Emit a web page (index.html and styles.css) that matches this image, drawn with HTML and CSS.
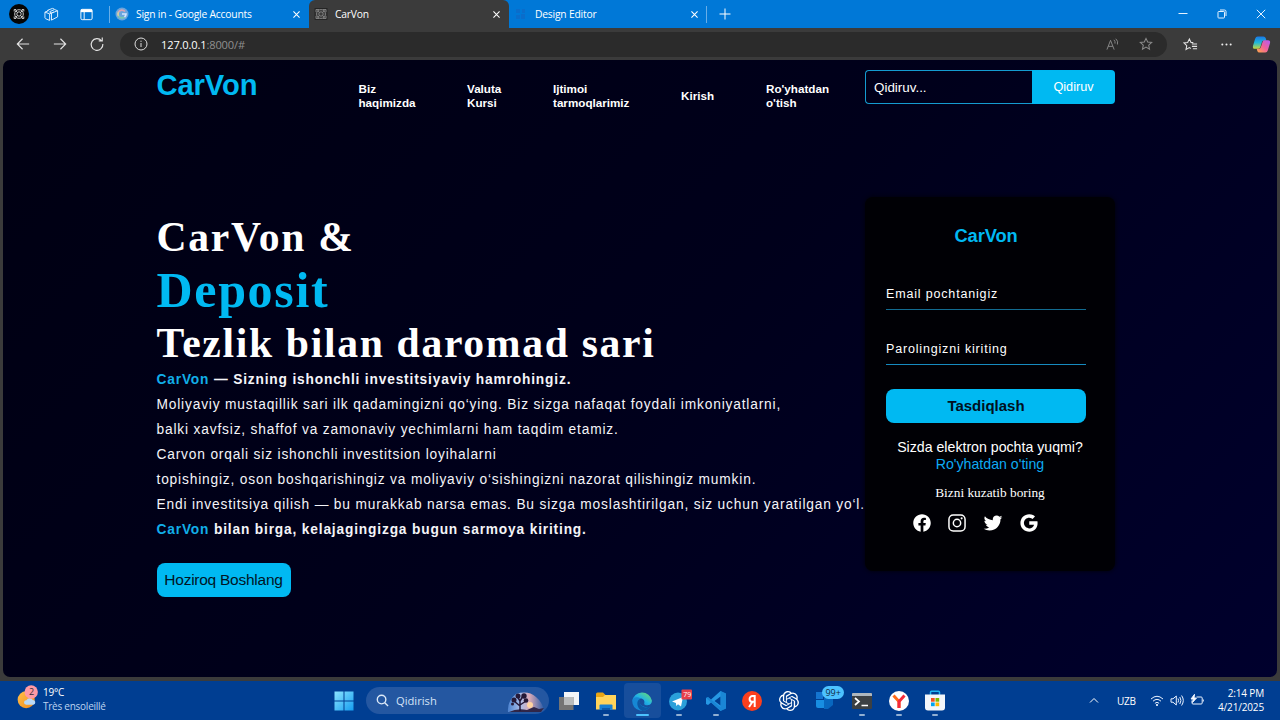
FILE: index.html
```html
<!DOCTYPE html>
<html lang="uz">
<head>
<meta charset="utf-8">
<title>CarVon</title>
<link rel="stylesheet" href="styles.css">
</head>
<body>
<div class="tabs">
  <div class="tab-tools">
    <svg class="profile" viewBox="0 0 20 20"><circle cx="10" cy="10" r="10" fill="#050505"/><g fill="none" stroke="#ddd" stroke-width=".9"><circle cx="10" cy="10" r="4.300"/><circle cx="10" cy="10" r="2.200"/><path d="M5.200 7.500V5.500h2M12.800 5.500h2v2M14.800 12.500v2h-2M7.200 14.500h-2v-2M6.500 6.500l2 2M13.500 6.500l-2 2M6.500 13.500l2-2M13.500 13.500l-2-2"/></g></svg>
    <svg class="tool" viewBox="0 0 16 16" fill="none" stroke="#e4f2ff"><path d="M1 5.500 6 7.300v7L1.800 12.500Q1 12 1 11.500zM1 5.500 5 3.800M6 7.300l4.500-2M3.800 4.300V3.500L9 1.500l2 .7M8 6.500l6.500-2.500v6.500L8 14zM8 6.500 6 5.500M14.500 4l-3.200-1.300L6 5"/></svg>
    <svg class="tool" viewBox="0 0 16 16" fill="none" stroke="#fff"><rect x="2" y="2.500" width="12" height="11" rx="1.500"/><path d="M2 4h12" stroke-width="3"/><path d="M5.500 5v8"/></svg>
  </div>
  <span class="divider"></span>
  <div class="tab first">
    <svg class="fav" viewBox="0 0 14 14"><circle cx="7" cy="7" r="6.500" fill="#6aa5dc"/><g fill="none" stroke-width="1.700"><path d="M10 4.500A4 4 0 0 0 3.500 5" stroke="#dca3b2"/><path d="M3.500 5a4 4 0 0 0 0 4" stroke="#d9cfa0"/><path d="M3.500 9A4 4 0 0 0 9.500 10" stroke="#7bc7b0"/><path d="M9.500 10A4 4 0 0 0 11 7H7" stroke="#d5e5ff"/></g></svg>
    <span class="tab-name">Sign in - Google Accounts</span>
    <svg class="x" viewBox="0 0 8 8"><path d="M.5.5l7 7M7.500.5l-7 7"/></svg>
  </div>
  <div class="tab active">
    <svg class="fav" viewBox="0 0 14 14" fill="none" stroke="#8d8d8d" stroke-width=".8"><rect x="1" y="1.500" width="12" height="11" stroke="#202020"/><circle cx="7" cy="7" r="4.500"/><circle cx="7" cy="7" r="2.200"/><path d="M2 5V2.500h3M9 2.500h3V5M12 9v2.500H9M5 11.500H2V9M3.500 3.500l2 2M10.500 3.500l-2 2M3.500 10.500l2-2M10.500 10.500l-2-2"/></svg>
    <span class="tab-name">CarVon</span>
    <svg class="x" viewBox="0 0 8 8"><path d="M.5.5l7 7M7.500.5l-7 7"/></svg>
  </div>
  <div class="tab last">
    <svg class="fav" viewBox="0 0 14 14" fill="#0a6dcb"><rect x="2" y="2" width="4" height="4"/><rect x="8" y="2" width="3" height="4"/><rect x="2" y="8" width="4" height="4"/><rect x="7" y="7" width="4" height="5"/></svg>
    <span class="tab-name">Design Editor</span>
    <svg class="x" viewBox="0 0 8 8"><path d="M.5.5l7 7M7.500.5l-7 7"/></svg>
  </div>
  <span class="divider short"></span>
  <svg class="plus" viewBox="0 0 12 12"><path d="M6 .5v11M.5 6h11"/></svg>
  <div class="win">
    <svg viewBox="0 0 10 10"><path d="M.5 4.500h9"/></svg>
    <svg viewBox="0 0 10 10"><rect x="1" y="2.500" width="6.500" height="6.500" rx=".7"/><path d="M3 1h4.500q1.500 0 1.500 1.500V7"/></svg>
    <svg viewBox="0 0 10 10"><path d="M.8.8l8.400 8.400M9.200.8.8 9.200"/></svg>
  </div>
</div>

<div class="toolbar">
  <div class="nav-btns">
    <svg viewBox="0 0 16 16"><path d="M15 8H1.800M7.500 2 1.500 8l6 6"/></svg>
    <svg viewBox="0 0 16 16"><path d="M1 8h13.200M8.500 2l6 6-6 6"/></svg>
    <svg viewBox="0 0 16 16"><path d="M13.200 4.300A6.700 6.700 0 1 0 14.700 8M14 .5v4h-4"/></svg>
  </div>
  <div class="address">
    <svg class="info" viewBox="0 0 14 14"><circle cx="7" cy="7" r="6"/><path d="M7 6v4M7 3.700v1.200"/></svg>
    <span class="url">127.0.0.1<span>:8000/#</span></span>
    <svg class="aloud" viewBox="0 0 14 14"><path d="M1 12.500 4.900 2.500l3.900 10M2.400 9h5M8.500 2q1.700 1.500 1.200 4M10.500.8q3 2.500 1.800 6.200"/></svg>
    <svg class="star" viewBox="0 0 16 16"><path d="m8 1.600 1.900 4.200 4.600.5-3.400 3.100.9 4.500L8 11.600l-4 2.300.9-4.500L1.500 6.300l4.600-.5z"/></svg>
  </div>
  <div class="actions">
    <svg class="favlist" viewBox="0 0 16 16"><path d="M11 6 8.500 5.800 6.800 2 5 5.800 1 6.300l3 2.900-.8 4.200L6.800 11.300l1.500.9M9.500 7.500H15M9.500 10H15M10.500 12.500H15"/></svg>
    <svg class="dots" viewBox="0 0 14 14"><circle cx="2.500" cy="7" r="1.100"/><circle cx="7" cy="7" r="1.100"/><circle cx="11.500" cy="7" r="1.100"/></svg>
    <svg class="copilot" viewBox="0 0 20 20"><defs><linearGradient id="ca" x1="0" y1="0" x2="0" y2="1"><stop offset="0" stop-color="#1877e8"/><stop offset=".5" stop-color="#20b6d9"/><stop offset="1" stop-color="#c8d63a"/></linearGradient><linearGradient id="cb" x1="1" y1="0" x2="0" y2="1"><stop offset="0" stop-color="#b15cf5"/><stop offset=".5" stop-color="#f0609c"/><stop offset="1" stop-color="#ffab45"/></linearGradient></defs><path d="M6 1.500h6q2 0 2.500 2l.7 2.500h-3q-1.400 0-1.800 1.500L8.800 13q-.5 1.500-2 1.500H3Q.5 14.500 1 11.500L3.300 4Q4 1.500 6 1.500z" fill="url(#ca)"/><path d="M14 18.500H8q-2 0-2.500-2L5 14.500h2.500q1.400 0 1.800-1.500L11.200 7q.5-1.500 2-1.500H17q2.500 0 2 3L16.700 16q-.7 2.500-2.700 2.500z" fill="url(#cb)"/></svg>
  </div>
</div>

<main class="page">
  <header class="head">
    <div class="logo">CarVon</div>
    <nav class="menu">
      <a class="m1">Biz<br>haqimizda</a>
      <a class="m2">Valuta<br>Kursi</a>
      <a class="m3">Ijtimoi<br>tarmoqlarimiz</a>
      <a class="m4">Kirish</a>
      <a class="m5">Ro'yhatdan<br>o'tish</a>
    </nav>
    <div class="search"><span class="search-field">Qidiruv...</span><span class="search-btn">Qidiruv</span></div>
  </header>
  <div class="content">
    <section class="hero">
      <h1><span>CarVon &amp;</span><span class="big">Deposit</span><span>Tezlik bilan daromad sari</span></h1>
      <p><b><i>CarVon</i> — Sizning ishonchli investitsiyaviy hamrohingiz.</b><br>Moliyaviy mustaqillik sari ilk qadamingizni qo‘ying. Biz sizga nafaqat foydali imkoniyatlarni,<br>balki xavfsiz, shaffof va zamonaviy yechimlarni ham taqdim etamiz.<br>Carvon orqali siz ishonchli investitsion loyihalarni<br>topishingiz, oson boshqarishingiz va moliyaviy o‘sishingizni nazorat qilishingiz mumkin.<br>Endi investitsiya qilish — bu murakkab narsa emas. Bu sizga moslashtirilgan, siz uchun yaratilgan yo‘l.<br><b><i>CarVon</i> bilan birga, kelajagingizga bugun sarmoya kiriting.</b></p>
      <div class="cta">Hoziroq Boshlang</div>
    </section>
    <section class="form">
      <h2>CarVon</h2>
      <div class="field">Email pochtanigiz</div>
      <div class="field second">Parolingizni kiriting</div>
      <div class="submit">Tasdiqlash</div>
      <div class="signup">Sizda elektron pochta yuqmi?<br><a>Ro'yhatdan o'ting</a></div>
      <div class="follow">Bizni kuzatib boring</div>
      <div class="social">
        <svg viewBox="0 0 512 512"><path d="M480 257.350c0-123.700-100.300-224-224-224s-224 100.300-224 224c0 111.800 81.900 204.470 189 221.290V322.120h-56.890v-64.770H221V208c0-56.130 33.450-87.160 84.610-87.160 24.510 0 50.150 4.380 50.150 4.380v55.130H327.500c-27.810 0-36.510 17.260-36.510 35v42h62.120l-9.920 64.770H291v156.540c107.100-16.810 189-109.480 189-221.310z"/></svg>
        <svg viewBox="0 0 512 512"><rect x="50" y="50" width="412" height="412" rx="110" fill="none" stroke="#fff" stroke-width="38"/><circle cx="256" cy="256" r="94" fill="none" stroke="#fff" stroke-width="38"/><circle cx="375" cy="137" r="27"/></svg>
        <svg viewBox="0 0 512 512"><path d="M496 109.500a201.800 201.800 0 01-56.550 15.300 97.510 97.510 0 0043.330-53.600 197.740 197.740 0 01-62.560 23.500A99.140 99.140 0 00348.310 64c-54.420 0-98.460 43.400-98.460 96.900a93.210 93.210 0 002.540 22.100 280.700 280.700 0 01-203-101.300A95.690 95.690 0 0036 130.400c0 33.600 17.530 63.300 44 80.700A97.500 97.500 0 0135.220 199v1.200c0 47 34 86.100 79 95a100.760 100.760 0 01-25.940 3.400 94.380 94.380 0 01-18.510-1.800c12.510 38.500 48.920 66.500 92.050 67.300A199.590 199.590 0 0139.500 405.600a203 203 0 01-23.500-1.400A278.680 278.680 0 00166.740 448c181.360 0 280.440-147.700 280.440-275.800 0-4.200-.11-8.400-.31-12.500A198.480 198.480 0 00496 109.500z"/></svg>
        <svg viewBox="0 0 512 512"><path d="M473.160 221.480l-2.260-9.590H262.460v88.220H387c-12.930 61.400-72.930 93.720-121.940 93.720-35.660 0-73.250-15-98.130-39.110a140.080 140.080 0 01-41.800-98.880c0-37.160 16.700-74.330 41-98.780s61-38.130 97.490-38.130c41.790 0 71.740 22.190 82.940 32.310l62.690-62.360C390.860 72.720 340.340 32 261.600 32c-60.750 0-119 23.270-161.580 65.710C58 139.500 36.250 199.930 36.250 256s20.580 113.480 61.300 155.600c43.510 44.920 105.130 68.400 168.580 68.400 57.730 0 112.450-22.620 151.450-63.660 38.340-40.400 58.170-96.300 58.170-154.900 0-24.670-2.480-39.320-2.590-39.960z"/></svg>
      </div>
    </section>
  </div>
</main>

<footer class="taskbar">
  <div class="weather">
    <svg viewBox="0 0 24 28"><defs><linearGradient id="sun" x1="0" y1="0" x2="1" y2="1"><stop offset="0" stop-color="#ffc04a"/><stop offset="1" stop-color="#f28b1c"/></linearGradient></defs><circle cx="10" cy="17" r="9.300" fill="url(#sun)"/><path d="M10 22.500a2.500 2.500 0 0 1 .3-5 4 4 0 0 1 7-.3 2.700 2.700 0 0 1 .7 5.300z" fill="#b9d9f7"/><circle cx="15.500" cy="8.500" r="7.300" fill="#ff99a4"/></svg>
    <span class="badge">2</span>
    <div class="weather-text"><div>19°C</div><div class="desc">Très ensoleillé</div></div>
  </div>
  <div class="apps">
    <svg class="start" viewBox="0 0 20 20"><defs><linearGradient id="wn" x1="0" y1="0" x2="1" y2="1"><stop offset="0" stop-color="#8be4ff"/><stop offset="1" stop-color="#149df0"/></linearGradient></defs><path d="M.5.5h9v9h-9zM10.500.5h9v9h-9zM.5 10.500h9v9h-9zM10.500 10.500h9v9h-9z" fill="url(#wn)"/></svg>
    <div class="find">
      <svg class="lens" viewBox="0 0 14 14"><circle cx="6" cy="6" r="4.600"/><path d="m9.400 9.400 3.600 3.600"/></svg>
      <span>Qidirish</span>
      <svg class="scene" viewBox="0 0 40 22"><defs><linearGradient id="sky" x1="0" x2="1"><stop offset="0" stop-color="#4b82cf"/><stop offset=".35" stop-color="#a9bdea"/><stop offset=".6" stop-color="#d9aab6"/><stop offset="1" stop-color="#2b5ba7"/></linearGradient></defs><path d="M2 21Q1 10 10 3q12-4 20 3 6 5 8 13l-4 2z" fill="url(#sky)"/><circle cx="24" cy="14" r="3" fill="#ffd3a0"/><path d="M3 21q8-4 18-2l7-3 5 2 5-1-3 4z" fill="#302648"/><path d="M14 20V9M14 15 8 10M14 14l6-4M14 10l-3-5M14 10l3-5" stroke="#241737" stroke-width="1.500" fill="none"/><g fill="#251937"><circle cx="8" cy="9" r="2.500"/><circle cx="12" cy="5" r="2.500"/><circle cx="18" cy="5" r="2.700"/><circle cx="20" cy="9.500" r="2.300"/><circle cx="6.500" cy="13" r="1.500"/></g></svg>
    </div>
    <div class="app"><svg viewBox="0 0 20 20"><rect x="5" y="1" width="15" height="13" fill="#f2f5f8"/><rect x="0" y="6" width="14.500" height="13" fill="#747474"/><path d="M5 6h9.500v8H5z" fill="#b9bcbd"/></svg></div>
    <div class="app run"><svg viewBox="0 0 20 20"><path d="M0 3q0-1.500 1.500-1.500h5.500l2.500 2.500H19q1 0 1 1V18H0z" fill="#e8a515"/><path d="M0 6h7l2-2h11v14.500H0z" fill="#ffd45b"/><path d="M3.500 19v-4.500q0-1 1-1h11q1 0 1 1V19z" fill="#1680d4"/><path d="M6 19v-2h8v2z" fill="#0d5bab"/></svg></div>
    <div class="app run current"><svg viewBox="0 0 20 20"><defs><linearGradient id="ed" x1="0" y1="1" x2="1" y2="0"><stop offset="0" stop-color="#0d69c4"/><stop offset=".5" stop-color="#22b4e6"/><stop offset="1" stop-color="#73e35c"/></linearGradient></defs><path d="M.2 10A10 10 0 0 1 19.900 9.500c.1 3-2 4.700-4.500 4.700-2.400 0-3.500-.8-3.200-1.800.8-2.400-.5-5-3.800-5-4 0-7 1.300-8.200 2.600z" fill="url(#ed)"/><path d="M.2 10C1 6.300 5 5.300 8.400 7.300 5.800 9 6.700 15.500 15 16.500c1.200.1 2.500-.3 3.300-.9A10 10 0 0 1 .2 10z" fill="#1687d4"/><path d="M7.300 8.300C3.500 11 5.500 18.500 10.500 19.900c3.500-.1 6.200-1.800 7.800-4.300C11 18.500 6.700 13 7.300 8.300z" fill="#0d57a4"/></svg></div>
    <div class="app run"><svg viewBox="0 0 20 20"><circle cx="9" cy="10.500" r="9" fill="#2aa0da"/><path d="m3 10.500 11-4.500-2 9.500-3-2.300-1.700 1.700-.4-2.800z" fill="#fff"/><rect x="12.500" y="-1.500" width="10.500" height="10" rx="1" fill="#e8404a"/></svg><span class="tg-count">79</span></div>
    <div class="app run"><svg viewBox="0 0 20 20"><path d="M14.500 0 20 2.500v15L14.500 20 5 11.500 2 14 0 13V7l2-1 3 2.500zM14.500 5.500 8.500 10l6 4.500z" fill="#2698e5" fill-rule="evenodd"/><path d="m0 7 2-1 13 10.500V20zM14.500 0 20 2.500v15L14.500 20z" fill="#1178c8" opacity=".55"/></svg></div>
    <div class="app"><svg viewBox="0 0 20 20"><circle cx="10" cy="10" r="10" fill="#fc3f1d"/><path d="M12.700 4v12M12.700 5h-2.200a2.900 2.900 0 0 0 0 5.800h2.200M10.500 10.800 7 16" fill="none" stroke="#fff" stroke-width="2"/></svg></div>
    <div class="app"><svg viewBox="0 0 24 24"><path fill="#fff" d="M22.2819 9.8211a5.9847 5.9847 0 0 0-.5157-4.9108 6.0462 6.0462 0 0 0-6.5098-2.9A6.0651 6.0651 0 0 0 4.9807 4.1818a5.9847 5.9847 0 0 0-3.9977 2.9 6.0462 6.0462 0 0 0 .7427 7.0966 5.98 5.98 0 0 0 .511 4.9107 6.051 6.051 0 0 0 6.5146 2.9001A5.9847 5.9847 0 0 0 13.2599 24a6.0557 6.0557 0 0 0 5.7718-4.2058 5.9894 5.9894 0 0 0 3.9977-2.9001 6.0557 6.0557 0 0 0-.7475-7.0729zm-9.022 12.6081a4.4755 4.4755 0 0 1-2.8764-1.0408l.1419-.0804 4.7783-2.7582a.7948.7948 0 0 0 .3927-.6813v-6.7369l2.02 1.1686a.071.071 0 0 1 .038.052v5.5826a4.504 4.504 0 0 1-4.4945 4.4944zm-9.6607-4.1254a4.4708 4.4708 0 0 1-.5346-3.0137l.142.0852 4.783 2.7582a.7712.7712 0 0 0 .7806 0l5.8428-3.3685v2.3324a.0804.0804 0 0 1-.0332.0615L9.74 19.9502a4.4992 4.4992 0 0 1-6.1408-1.6464zM2.3408 7.8956a4.485 4.485 0 0 1 2.3655-1.9728V11.6a.7664.7664 0 0 0 .3879.6765l5.8144 3.3543-2.0201 1.1685a.0757.0757 0 0 1-.071 0l-4.8303-2.7865A4.504 4.504 0 0 1 2.3408 7.872zm16.5963 3.8558L13.1038 8.364 15.1192 7.2a.0757.0757 0 0 1 .071 0l4.8303 2.7913a4.4944 4.4944 0 0 1-.6765 8.1042v-5.6772a.79.79 0 0 0-.407-.667zm2.0107-3.0231l-.142-.0852-4.7735-2.7818a.7759.7759 0 0 0-.7854 0L9.409 9.2297V6.8974a.0662.0662 0 0 1 .0284-.0615l4.8303-2.7866a4.4992 4.4992 0 0 1 6.6802 4.66zM8.3065 12.863l-2.02-1.1638a.0804.0804 0 0 1-.038-.0567V6.0742a4.4992 4.4992 0 0 1 7.3757-3.4537l-.142.0805L8.704 5.459a.7948.7948 0 0 0-.3927.6813zm1.0976-2.3654l2.602-1.4998 2.6069 1.4998v2.9994l-2.5974 1.4997-2.6067-1.4997Z"/></svg></div>
    <div class="app"><svg viewBox="0 0 20 20"><path d="M1 1h7v7H1z" fill="#1474d0"/><path d="M1 9h8v8H3q-2 0-2-2z" fill="#188ee2"/><path d="M9 7h9v7l-5 4H9z" fill="#0867bf"/></svg><span class="count">99+</span></div>
    <div class="app run"><svg viewBox="0 0 20 20"><rect y="2" width="20" height="16" rx="1" fill="#3c4043"/><path d="M0 5V3q0-1 1-1h18q1 0 1 1v2z" fill="#aeb6bd"/><path d="m3 7 4 3.500L3 14M9.500 14.500H16" stroke="#fff" stroke-width="1.700" fill="none"/></svg></div>
    <div class="app run"><svg viewBox="0 0 20 20"><circle cx="10" cy="10" r="10" fill="#fff"/><path d="M4.500 4.500 10 10.500V17" stroke="#ff6b1a" stroke-width="3" fill="none"/><path d="M15.500 4.500 10 10.500V17" stroke="#f52b3b" stroke-width="3" fill="none"/></svg></div>
    <div class="app run"><svg viewBox="0 0 20 20"><path d="M5.500 5V1.300q0-1 1-1h7q1 0 1 1V5" fill="none" stroke="#21b6f3" stroke-width="1.500"/><path d="M0 3.500h20V16.500q0 3-3 3H3q-3 0-3-3z" fill="#f3f6fa"/><path d="M6 7h3.700v3.700H6z" fill="#f25022"/><path d="M10.500 7h3.700v3.700h-3.700z" fill="#7fba00"/><path d="M6 11.500h3.700v3.700H6z" fill="#00a4ef"/><path d="M10.500 11.500h3.700v3.700h-3.700z" fill="#ffb900"/></svg></div>
  </div>
  <div class="tray">
    <svg class="chev" viewBox="0 0 10 10"><path d="m1 6.500 4-4 4 4"/></svg>
    <span class="lang">UZB</span>
    <svg class="ti" viewBox="0 0 14 14"><path d="M1 5q6-5.500 12 0M3 7.200q4-3.700 8 0M4.900 9.300q2.100-2 4.200 0"/><circle cx="7" cy="11" r=".7" fill="#fff"/></svg>
    <svg class="ti" viewBox="0 0 14 14"><path d="M1 4.800h2L6.300 2v9L3 8.200H1zM8 4.500q1.200 2 0 4M9.800 3q2.300 3.500 0 7M11.600 1.500q3.400 5 0 10"/></svg>
    <svg class="ti" viewBox="0 0 14 14"><path d="M6.500 3h4.700q1 0 1 1v5q0 1-1 1H3q-1 0-1-1V6.500M13.300 5.500v2"/><path d="M4.500.3 1 5h2.300L2.500 8.500l4-4.500H4z" fill="#fff"/></svg>
    <div class="clock"><div>2:14 PM</div><div>4/21/2025</div></div>
  </div>
</footer>
</body>
</html>
```
FILE: styles.css
```css
* { box-sizing: border-box; }
body { margin: 0; width: 1280px; height: 720px; overflow: hidden; background: #3b3b3b; display: flex; flex-direction: column; font-family: "Open Sans", "Noto Sans", sans-serif; }
svg { display: block; flex: none; overflow: visible; }

.tabs { height: 28px; background: #0078d7; display: flex; align-items: center; flex: none; color: #fff; font-size: 10.3px; letter-spacing: -.2px; }
.tab-tools { display: flex; align-items: center; width: 109px; padding-left: 9px; gap: 15px; }
.profile { width: 20px; height: 20px; }
.tool { width: 15px; height: 15px; }
.tool + .tool { margin-left: 5px; }
.divider { width: 1px; height: 17px; background: #68aee8; }
.tab { display: flex; align-items: center; height: 28px; padding: 0 9px 0 5px; }
.first { width: 199px; }
.active { width: 200px; background: #3b3b3b; border-radius: 6px 6px 0 0; }
.last { width: 197px; padding-right: 8px; }
.fav { width: 14px; height: 14px; margin-right: 7px; }
.tab-name { flex: 1; white-space: nowrap; }
.x { width: 7px; height: 7px; stroke: #fff; stroke-width: 1.2; fill: none; }
.plus { width: 12px; height: 12px; margin-left: 12px; stroke: #fff; }
.win { margin-left: auto; display: flex; gap: 29px; padding-right: 14px; }
.win svg { width: 10px; height: 10px; stroke: #e5f2ff; fill: none; }

.toolbar { height: 32px; flex: none; display: flex; align-items: center; background: #3b3b3b; }
.nav-btns { display: flex; gap: 23px; width: 120px; padding-left: 16px; }
.nav-btns svg { width: 14px; height: 14px; stroke: #e3e3e3; fill: none; stroke-width: 1.3; }
.address { width: 1047px; height: 25px; border-radius: 13px; background: #2b2b2b; display: flex; align-items: center; padding: 0 14px; }
.info { width: 14px; height: 14px; stroke: #ddd; fill: none; }
.url { color: #fff; font-size: 11.1px; margin-left: 13px; flex: 1; letter-spacing: -.15px; }
.url span { color: #8f8f8f; }
.aloud { width: 13px; height: 13px; stroke: #8b8b8b; fill: none; margin-right: 20px; }
.star { width: 14px; height: 14px; stroke: #8b8b8b; fill: none; stroke-width: 1.2; }
.actions { display: flex; align-items: center; padding-left: 16px; }
.favlist { width: 15px; height: 15px; stroke: #e4e4e4; fill: none; stroke-width: 1.1; }
.dots { width: 13px; height: 13px; fill: #eee; margin-left: 22px; }
.copilot { width: 19px; height: 19px; margin-left: 19px; }

.page { height: 617px; flex: none; margin: 0 3px 4px; border-radius: 7px; background: linear-gradient(135deg, #000012 0%, #00001b 50%, #00002d 100%); color: #fff; padding: 10px 162px 0 153.5px; font-family: "Liberation Sans", Arial, sans-serif; }
.head { display: flex; height: 126px; }
.logo { width: 202px; color: #00b9f2; font-size: 29.17px; font-weight: bold; line-height: 31px; letter-spacing: -.1px; }
.menu { width: 506.500px; height: 52px; display: flex; align-items: center; font-size: 11.67px; line-height: 14px; font-weight: bold; white-space: nowrap; }
.m1 { width: 108.500px; }
.m2 { width: 86px; }
.m3 { width: 128px; }
.m4 { width: 85px; }
.search { display: flex; width: 250px; height: 34px; }
.search-field { width: 167px; height: 34px; border: 1px solid #149bd0; border-right: 0; border-radius: 4px 0 0 4px; padding: 1px 0 0 8px; font-size: 13.4px; line-height: 32px; }
.search-btn { width: 83px; background: #00b9f2; border-radius: 0 4px 4px 0; font-size: 12.7px; line-height: 34px; text-align: center; }

.content { display: flex; }
.hero { width: 708.500px; padding-top: 15px; }
h1 { margin: 0; font: bold 41.67px/53px "Liberation Serif", "Times New Roman", serif; letter-spacing: 1.67px; white-space: nowrap; }
h1 span { display: block; height: 53px; }
h1 .big { color: #00b9f2; font-size: 50px; }
p { margin: -3px 0 0; font-size: 13.74px; line-height: 25px; letter-spacing: .83px; white-space: nowrap; color: #f4f4f8; }
p i { font-style: normal; color: #11aee8; }
.cta { width: 134px; height: 34px; margin-top: 21px; border-radius: 8px; background: #00b9f2; color: #001525; font-size: 15.5px; letter-spacing: -.25px; line-height: 33px; text-align: center; white-space: nowrap; }

.form { width: 250px; height: 374px; margin-top: .5px; border-radius: 8px; background: #000005; padding: 27.500px 29px 0 21px; box-shadow: 0 0 4px #000008; }
h2 { margin: 0; font-size: 18.3px; line-height: 24px; color: #00b9f2; text-align: center; letter-spacing: -.1px; }
.field { margin-top: 31px; height: 31px; border-bottom: 1px solid #126b91; font-size: 12.5px; line-height: 31px; letter-spacing: .83px; }
.second { margin-top: 24px; border-color: #168abf; }
.submit { margin-top: 24px; height: 34px; border-radius: 8px; background: #00b9f2; color: #001020; font-size: 15px; font-weight: bold; line-height: 33px; text-align: center; }
.signup { margin: 16px -6px 0 2px; font-size: 14.17px; line-height: 17px; text-align: center; white-space: nowrap; }
.signup a { color: #0eaaf2; }
.follow { margin: 12px -8px 0 0; font-family: "Liberation Serif", serif; font-size: 13.33px; line-height: 16px; text-align: center; }
.social { display: flex; gap: 15.800px; padding-left: 25.500px; margin-top: 12px; }
.social svg { width: 20px; height: 20px; fill: #fff; }

.taskbar { height: 39px; flex: none; background: #003e92; display: flex; color: #fff; font-size: 10px; position: relative; }
.weather { width: 334px; display: flex; position: relative; padding-left: 17px; }
.weather svg { width: 22px; height: 26px; margin-top: 3px; }
.badge { position: absolute; left: 29px; top: 4px; font-size: 9px; line-height: 14px; color: #352d38; }
.weather-text { padding: 5px 0 0 4px; line-height: 13.500px; letter-spacing: -.25px; }
.desc { color: #bdd4f0; }
.apps { display: flex; align-items: center; }
.start { width: 20px; height: 20px; }
.find { width: 183px; height: 27px; margin: 0 2px 0 12px; border-radius: 14px; background: #2457a1; display: flex; align-items: center; padding-left: 10px; font-size: 11.2px; color: #d4e3f7; }
.lens { width: 13px; height: 13px; margin-right: 7px; stroke: #dce9f8; stroke-width: 1.500; fill: none; }
.scene { width: 40px; height: 22px; margin: 2px 3px 0 auto; }
.app { width: 36.600px; height: 35px; display: flex; align-items: center; justify-content: center; position: relative; }
.app svg { width: 20px; height: 20px; }
.run::after { content: ""; position: absolute; bottom: 2px; left: 15.500px; width: 6px; height: 2px; border-radius: 1px; background: #91afd2; }
.current { background: #174e9c; border-radius: 4px; }
.current::after { width: 13px; left: 12px; background: #4cc2ff; }
.count { position: absolute; left: 15px; top: 3px; width: 22px; height: 13px; border-radius: 7px; background: #4cc2ff; color: #102a45; font-size: 9px; line-height: 13px; text-align: center; }
.tg-count { position: absolute; left: 22.500px; top: 7px; font-size: 7px; line-height: 9px; }
.tray { margin-left: auto; display: flex; align-items: center; padding-right: 16px; }
.chev { width: 10px; height: 10px; stroke: #fff; fill: none; margin-right: 18px; }
.lang { width: 33px; letter-spacing: -.2px; }
.ti { width: 14px; height: 14px; stroke: #eaf2ff; fill: none; margin-right: 6px; }
.clock { width: 54px; text-align: right; line-height: 13.300px; letter-spacing: -.15px; white-space: nowrap; }
```
